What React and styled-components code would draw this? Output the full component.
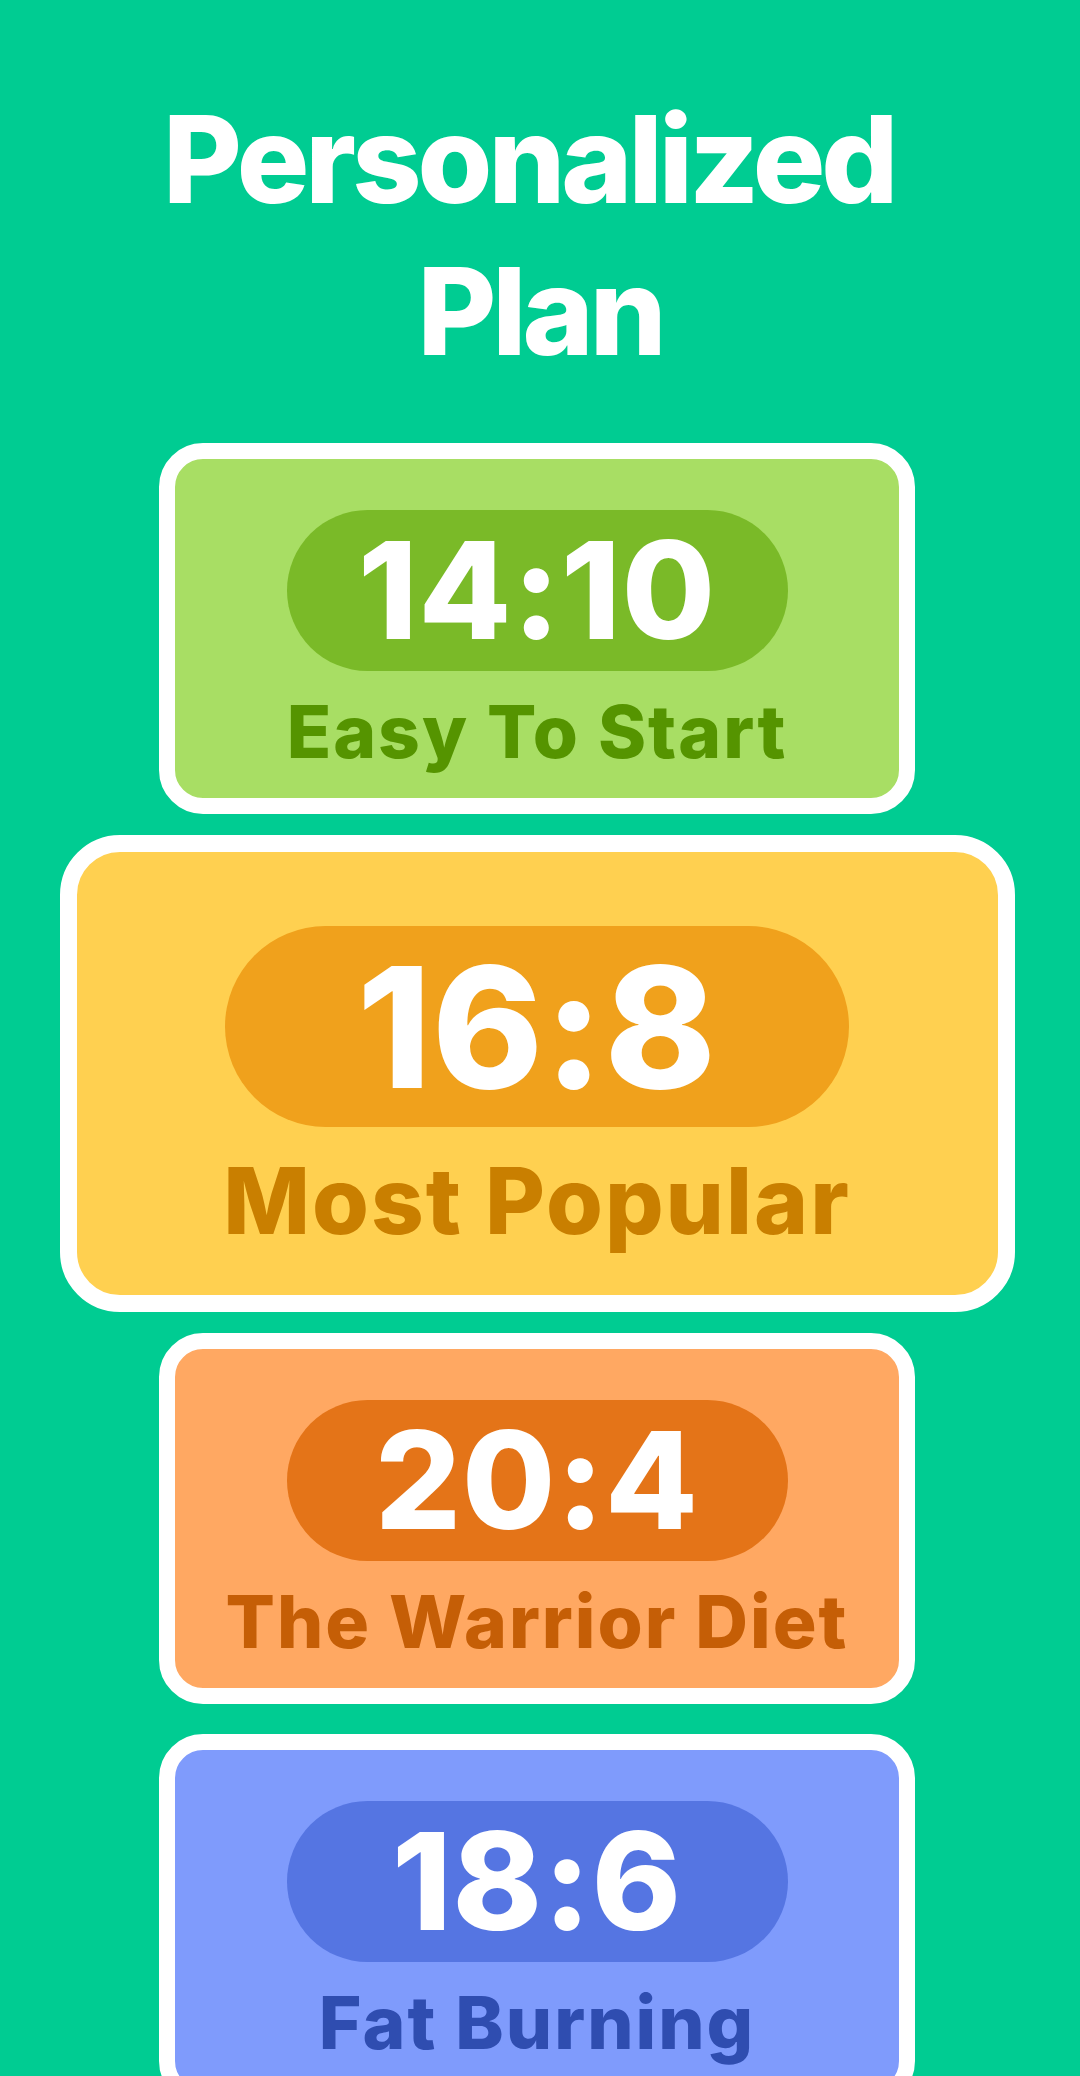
import React from 'react'
import styled, { createGlobalStyle } from 'styled-components'

const plans = [
  {
    ratio: '14:10',
    label: 'Easy To Start',
    bg: '#a8de64',
    pill: '#7aba28',
    text: '#559400',
  },
  {
    ratio: '16:8',
    label: 'Most Popular',
    bg: '#ffd050',
    pill: '#f0a11c',
    text: '#c97f00',
    big: true,
  },
  {
    ratio: '20:4',
    label: 'The Warrior Diet',
    bg: '#ffa862',
    pill: '#e47418',
    text: '#c55e06',
  },
  {
    ratio: '18:6',
    label: 'Fat Burning',
    bg: '#7f9bfc',
    pill: '#5575e2',
    text: '#2f4db0',
    gapTop: 9,
  },
]

const App = () => {
  return (
    <>
      <GlobalStyle />
      <Page>
        <Title>
          {'Personalized\u00a0'}
          <br />
          Plan
        </Title>
        <PlanList>
          {plans.map((p) => (
            <PlanCard
              key={p.ratio}
              $bg={p.bg}
              $big={p.big}
              $gapTop={p.gapTop}
            >
              <RatioPill $color={p.pill} $big={p.big}>
                {p.ratio}
              </RatioPill>
              <PlanLabel $color={p.text} $big={p.big}>
                {p.label}
              </PlanLabel>
            </PlanCard>
          ))}
        </PlanList>
      </Page>
    </>
  )
}

const GlobalStyle = createGlobalStyle`
  body {
    margin: 0;
    background: #00cc92;
    font-family: 'Inter', 'Liberation Sans', sans-serif;
  }
`

const Page = styled.div`
  min-height: 2076px;
  background: #00cc92;
  display: flex;
  flex-direction: column;
  align-items: center;
  padding-top: 83px;
  box-sizing: border-box;
  overflow: hidden;
`

const Title = styled.h1`
  margin: 0 0 56px;
  color: #fff;
  font-size: 121px;
  line-height: 152px;
  font-weight: 800;
  letter-spacing: -4px;
  text-align: center;
`

const PlanList = styled.div`
  display: flex;
  flex-direction: column;
  align-items: center;
  gap: 21px;
  margin-right: 6px;
`

const PlanCard = styled.div`
  box-sizing: border-box;
  width: ${(p) => (p.$big ? '955px' : '756px')};
  height: ${(p) => (p.$big ? '477px' : '371px')};
  margin-top: ${(p) => p.$gapTop || 0}px;
  border: ${(p) => (p.$big ? '17px' : '16px')} solid #fff;
  border-radius: ${(p) => (p.$big ? '60px' : '44px')};
  background: ${(p) => p.$bg};
  display: flex;
  flex-direction: column;
  align-items: center;
  padding-top: ${(p) => (p.$big ? '74px' : '51px')};
`

const RatioPill = styled.div`
  width: ${(p) => (p.$big ? '624px' : '501px')};
  height: ${(p) => (p.$big ? '201px' : '161px')};
  border-radius: 200px;
  background: ${(p) => p.$color};
  color: #fff;
  display: flex;
  align-items: center;
  justify-content: center;
  font-size: ${(p) => (p.$big ? '168px' : '135px')};
  font-weight: 800;
  letter-spacing: 1px;
  line-height: 1;
`

const PlanLabel = styled.div`
  margin-top: ${(p) => (p.$big ? '28px' : '24px')};
  color: ${(p) => p.$color};
  font-size: ${(p) => (p.$big ? '92px' : '73px')};
  font-weight: 800;
  letter-spacing: 2px;
  line-height: 1;
  white-space: nowrap;
`

export default App
